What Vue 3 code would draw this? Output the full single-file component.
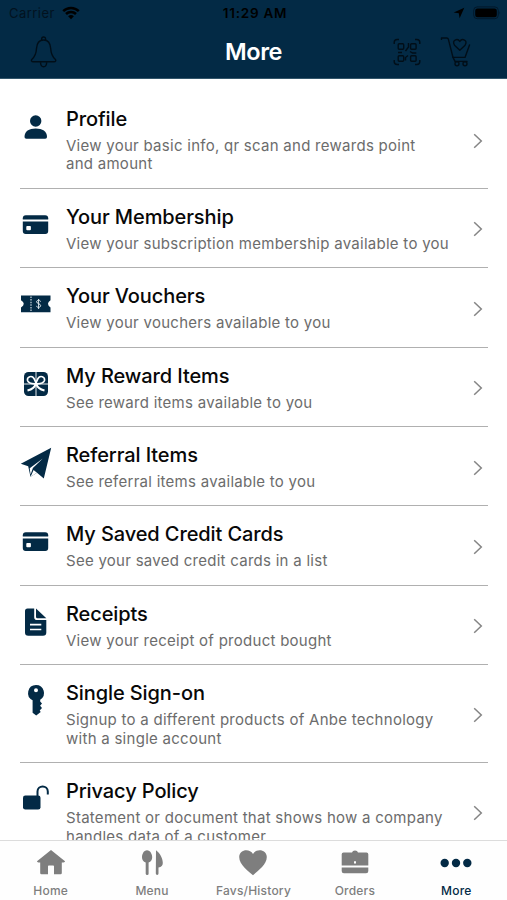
<script setup>
const rows = [
  { icon: 'profile', title: 'Profile', lines: ['View your basic info, qr scan and rewards point', 'and amount'] },
  { icon: 'card', title: 'Your Membership', lines: ['View your subscription membership available to you'] },
  { icon: 'voucher', title: 'Your Vouchers', lines: ['View your vouchers available to you'] },
  { icon: 'gift', title: 'My Reward Items', lines: ['See reward items available to you'] },
  { icon: 'plane', title: 'Referral Items', lines: ['See referral items available to you'] },
  { icon: 'card', title: 'My Saved Credit Cards', lines: ['See your saved credit cards in a list'] },
  { icon: 'receipt', title: 'Receipts', lines: ['View your receipt of product bought'] },
  { icon: 'key', title: 'Single Sign-on', lines: ['Signup to a different products of Anbe technology', 'with a single account'] },
  { icon: 'lock', title: 'Privacy Policy', lines: ['Statement or document that shows how a company', 'handles data of a customer'] },
]
const tabs = ['Home', 'Menu', 'Favs/History', 'Orders', 'More']
</script>

<template>
  <div class="screen">
    <header class="header">
      <div class="status">
        <div class="carrier">
          <span>Carrier</span>
          <svg width="18" height="14" viewBox="0 0 18 14" fill="none" stroke="#000" stroke-width="2.5">
            <path d="M1.2 5.2C5.6.8 12.400.8 16.800 5.200" />
            <path d="M4 8C6.800 5.200 11.200 5.200 14 8" />
            <path d="M9 13.200L6.100 10.200Q9 7.800 11.900 10.200Z" fill="#000" stroke="none" />
          </svg>
        </div>
        <span class="time">11:29 AM</span>
        <div class="power">
          <svg width="12" height="12" viewBox="0 0 12 12"><path d="M11.300.8L6.600 11.200L5.800 6.200L.7 5.500Z" /></svg>
          <svg width="28" height="14" viewBox="0 0 28 14">
            <rect x=".7" y=".9" width="24.600" height="11.800" rx="3.500" fill="none" stroke="#02182a" />
            <rect x="2.200" y="2.400" width="21.600" height="8.800" rx="2.300" />
            <path d="M26.500 5q1.300 1.800 0 3.600Z" fill="#02182a" />
          </svg>
        </div>
      </div>
      <div class="nav">
        <svg class="bell" width="28" height="34" viewBox="0 0 28 34" fill="none" stroke="#010e18" stroke-width="1.400" stroke-linejoin="round">
          <path d="M11.700 5.500V3.800Q11.700 2 13.600 2T15.500 3.800V5.500" />
          <path d="M13.600 5C8.600 5 6.800 9 6.500 13.500C6.200 19 5 21.500 2 24.200C.7 25.500 1.600 26.800 3.300 26.800H23.900C25.600 26.800 26.500 25.500 25.200 24.200C22.200 21.500 21 19 20.700 13.500C20.400 9 18.600 5 13.600 5Z" />
          <path d="M10.600 27.200C10 33.200 17.200 33.200 16.600 27.200" />
        </svg>
        <h1>More</h1>
        <div class="actions">
          <svg width="28" height="28" viewBox="0 0 28 28" fill="none" stroke="#010e18" stroke-width="1.400">
            <path d="M1.200 6V4.500Q1.200 1.500 4.200 1.500H6M22 1.500h1.800q3 0 3 3V6M1.200 22v1.500q0 3 3 3H6M22 26.500h1.800q3 0 3-3V22" />
            <rect x="5.200" y="5.700" width="5.500" height="5.500" rx="1" />
            <rect x="17.600" y="5.700" width="5.500" height="5.500" rx="1" />
            <rect x="5.200" y="17.800" width="5.500" height="5.500" rx="1" />
            <rect x="17.600" y="17.800" width="5.500" height="5.500" rx="1" />
            <path d="M15.500 5v4l-3 4M5 14.500h4M12.500 22.500v-3l2.500-2M17 13.500l2.500 1.500h3.800" />
          </svg>
          <svg width="32" height="34" viewBox="0 0 32 34" fill="none" stroke="#010e18" stroke-width="1.400" stroke-linecap="round" stroke-linejoin="round">
            <path d="M1.500 4.400V3H6.800Q8 3 8.400 4.300L13 22.400H25L29.500 10" />
            <path d="M19.800 15.200L14.500 10.200C11.200 5.200 17.700 2.600 19.800 6.500C21.900 2.600 28.400 5.200 25.100 10.200Z" />
            <path d="M13 22.400l2 4H27" />
            <circle cx="17" cy="28.800" r="2" /><circle cx="25" cy="28.800" r="2" />
          </svg>
        </div>
      </div>
    </header>

    <main class="list">
      <section v-for="row in rows" :key="row.title" class="row" :class="{ tall: row.lines.length > 1 }">
        <svg class="icon" width="32" height="32" viewBox="0 0 32 32" fill="#032a45">
          <template v-if="row.icon === 'profile'">
            <circle cx="15.700" cy="10" r="5.700" />
            <path d="M4.500 26C4.500 20.300 9 17.600 15.700 17.600S27 20.300 27 26Q27 27.800 25.200 27.800H6.300Q4.500 27.800 4.500 26Z" />
          </template>
          <template v-else-if="row.icon === 'card'">
            <path d="M2.800 10.500V9.300Q2.800 6.300 5.800 6.300H25.200Q28.200 6.300 28.200 9.300V10.500Z" />
            <path fill-rule="evenodd" d="M2.800 12.400H28.200V22.100Q28.200 25 25.300 25H5.700Q2.800 25 2.800 22.100ZM7.200 16.900Q6.300 16.900 6.300 17.800V20.300Q6.300 21.200 7.200 21.200H10Q10.900 21.200 10.900 20.300V17.800Q10.900 16.900 10 16.900Z" />
          </template>
          <template v-else-if="row.icon === 'voucher'">
            <path d="M1 7.500H30.500V12.200Q25.500 15.800 30.500 19.500V24.200H1V19.500Q6.500 15.800 1 12.200Z" />
            <path d="M11 8.500V24" fill="none" stroke="#e4ebf0" stroke-width="1.100" stroke-dasharray="1.500 1.100" />
            <path d="M20.500 13.500C20.500 11.800 16.600 11.800 16.600 13.800S20.700 15.600 20.700 17.700S16.500 19.800 16.500 17.900M18.600 11V21" fill="none" stroke="#dce5eb" stroke-width="1" />
          </template>
          <template v-else-if="row.icon === 'gift'">
            <rect x="4" y="4" width="24" height="24" rx="4.500" />
            <g fill="none" stroke="#fff" stroke-width="1.600">
              <path d="M4 16H28M16 4V28" stroke-width=".9" />
              <path d="M16 16C13 15.700 8.500 16 7.500 12.500C6.800 8.500 12 7 14 10.500C15 12.300 15.700 14 16 16C16.300 14 17 12.300 18 10.500C20 7 25.200 8.500 24.500 12.500C23.500 16 19 15.700 16 16Z" />
              <path d="M15.500 16.200Q14.500 20.700 7.500 22.500M16.500 16.200Q17.500 20.700 24.500 22.500" stroke-width="2" />
            </g>
          </template>
          <template v-else-if="row.icon === 'plane'">
            <path d="M31.200.7L23.800 31.500L17 25.800L10.500 29.800L8.200 19.300L.8 16.800Z" />
            <path d="M22.800 11.500L9.700 21.300L10.600 27.500L12.900 20.900ZM17 25.800L13.600 23.100L10.600 29.700Z" fill="#fff" />
          </template>
          <template v-else-if="row.icon === 'receipt'">
            <path d="M7.500 2.500H14.200V11.200Q14.200 14 17 14H26.300V26.400Q26.300 29.700 23 29.700H8.300Q5 29.700 5 26.400V5Q5 2.500 7.500 2.500Z" />
            <path d="M16 2.500L26.300 12.200H17.500Q16 12.200 16 10.700Z" />
            <path d="M10 18.600H21.300M10 23.500H21.300" fill="none" stroke="#fff" stroke-width="1.700" />
          </template>
          <template v-else-if="row.icon === 'key'">
            <path fill-rule="evenodd" d="M16 0A8 8 0 0 1 20.200 14.800V16.600L22 18.500L20.100 20.700L22 23.100L19.700 25.500L20.700 27L16.200 30.400L12.600 27.700V15.200A8 8 0 0 1 16 0ZM16 3.200A2 2 0 1 0 16 7.200A2 2 0 1 0 16 3.200Z" />
          </template>
          <template v-else>
            <rect x="3" y="12.500" width="17.500" height="14" rx="2.300" />
            <path d="M17.500 13V8.500C17.500 1.700 27.800 1.700 27.800 8.500V11.500" fill="none" stroke="#032a45" stroke-width="2" />
          </template>
        </svg>
        <div class="copy">
          <h2>{{ row.title }}</h2>
          <p v-for="line in row.lines" :key="line">{{ line }}</p>
        </div>
        <svg class="chevron" width="10" height="16" viewBox="0 0 10 16" fill="none" stroke="#858585" stroke-width="1.500"><path d="M1.200 1.200L8.300 8L1.200 14.800" /></svg>
      </section>
    </main>

    <nav class="tabs">
      <div v-for="tab in tabs" :key="tab" class="tab" :class="{ active: tab === 'More' }">
        <svg width="34" height="30" viewBox="0 0 34 30" fill="currentColor">
          <path v-if="tab === 'Home'" d="M17 2L31 13.300Q31.200 14.400 29.500 14.400H27.800V25Q27.800 26.200 26.600 26.200H20V18.200Q20 17.400 19.200 17.400H14.800Q14 17.400 14 18.200V26.200H7.400Q6.200 26.200 6.200 25V14.400H4.500Q2.800 14.400 3 13.300Z" />
          <g v-else-if="tab === 'Menu'">
            <path d="M12 2.200C15.200 2.200 17.200 6 17.200 9.200Q17.200 13 13.600 14.500V25.800Q13.600 27 12.200 27T10.700 25.800V14.500Q7 13 7 9.200C7 6 8.800 2.200 12 2.200Z" />
            <path d="M21 2.200C25 5 27.800 10.500 27.800 15Q27.800 18.700 23.500 19.500V25.600Q23.500 27 22.200 27T20.800 25.600Z" />
          </g>
          <path v-else-if="tab === 'Favs/History'" d="M17 27.200C13 23.500 3.200 17 3.200 9C3.200 1.500 13.500-.2 17 6C20.500-.2 30.800 1.500 30.800 9C30.800 17 21 23.500 17 27.200Z" />
          <g v-else-if="tab === 'Orders'">
            <path fill-rule="evenodd" d="M5.500 4.400H14Q14.500 2.600 17 2.600T20 4.400H28.500Q30.300 4.400 30.300 6.200V17.500H3.700V6.200Q3.700 4.400 5.500 4.400ZM16 13.300V15.500H18V13.300Z" />
            <path d="M3.700 19.500H30.300V23Q30.300 25.200 28.100 25.200H5.900Q3.700 25.200 3.700 23Z" />
          </g>
          <g v-else><circle cx="5.700" cy="15" r="4.200" /><circle cx="17" cy="15" r="4.200" /><circle cx="28.300" cy="15" r="4.200" /></g>
        </svg>
        <span>{{ tab }}</span>
      </div>
    </nav>
  </div>
</template>

<style>
body { margin: 0; }
</style>

<style scoped>
.screen { width: 507px; height: 900px; display: flex; flex-direction: column; overflow: hidden; background: #fff; font-family: Inter, "Liberation Sans", sans-serif; }
.header { box-sizing: border-box; height: 79px; flex: none; background: #032a45; border-bottom: 1px solid #33566b; }
.status { height: 26px; padding: 0 6px 0 9px; display: grid; grid-template-columns: 1fr auto 1fr; align-items: center; font-size: 13px; color: #000; }
.carrier { display: flex; align-items: center; gap: 7px; color: #02121f; letter-spacing: .45px; }
.time { font-weight: 600; font-size: 13.500px; letter-spacing: .75px; }
.power { display: flex; justify-content: flex-end; align-items: center; gap: 8px; }
.nav { height: 51px; padding: 0 35px 0 30px; display: grid; grid-template-columns: 1fr auto 1fr; align-items: center; }
h1 { margin: 0 0 0 5px; font-size: 23.500px; line-height: 30px; font-weight: 600; color: #fff; letter-spacing: -.4px; }
.actions { display: flex; justify-content: flex-end; align-items: center; gap: 19px; }
.list { flex: 1; min-height: 0; overflow: hidden; padding: 11.600px 19px 0 20px; }
.row { box-sizing: border-box; height: 79.400px; display: flex; border-bottom: 1px solid #b0b0b0; }
.row.tall { height: 98.200px; }
.icon { flex: none; margin-top: 20px; }
.copy { flex: 1; padding: 16px 0 0 14px; white-space: nowrap; }
h2 { margin: 0 0 6px; font-size: 20px; line-height: 24px; font-weight: 500; letter-spacing: -.1px; color: #080808; }
p { margin: 0; font-size: 15px; line-height: 18.700px; letter-spacing: .27px; color: #6c6c6c; }
.chevron { flex: none; align-self: center; margin: 3px 5px 0 0; }
.tabs { box-sizing: border-box; height: 60px; flex: none; display: grid; grid-template-columns: repeat(5, 1fr); border-top: 1px solid #dcdcdc; background: #fefefe; }
.tab { display: flex; flex-direction: column; align-items: center; padding-top: 7px; color: #7e7e7e; font-size: 12px; line-height: 15px; font-weight: 500; letter-spacing: .2px; }
.tab span { margin-top: 5px; }
.tab.active { color: #032a45; }
</style>
